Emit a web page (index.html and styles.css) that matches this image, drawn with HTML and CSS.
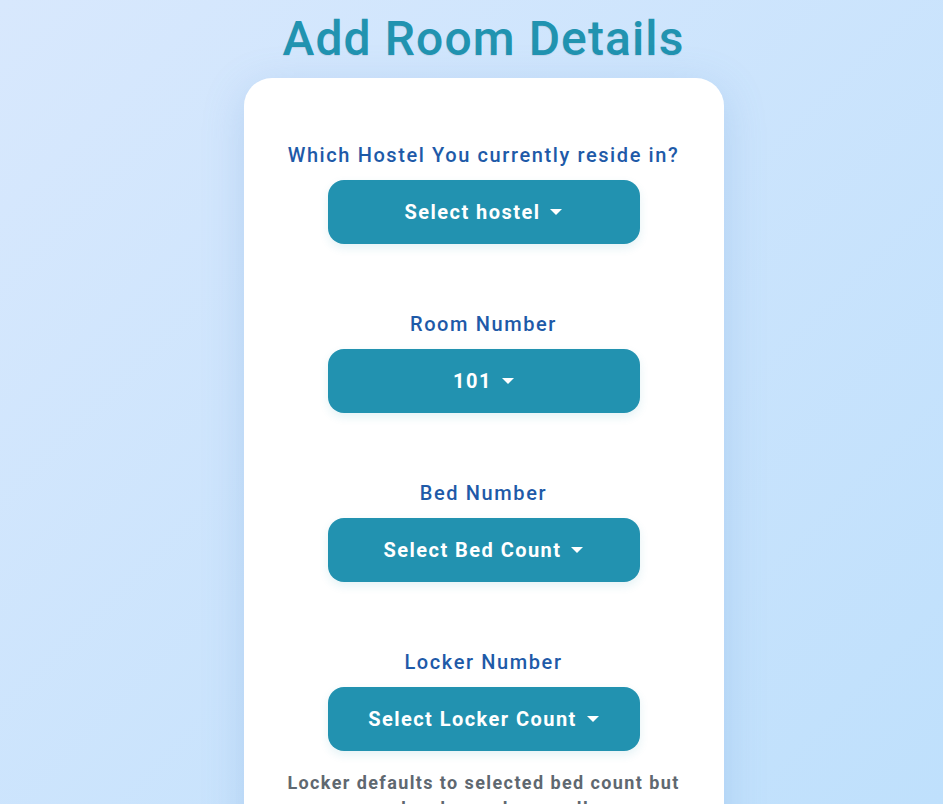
FILE: index.html
```html
<!DOCTYPE html>
<html>
<head>
<meta charset="utf-8">
<link rel="stylesheet" href="styles.css">
</head>
<body>
<main class="page">
  <h1 class="title">Add Room Details</h1>
  <section class="card">
    <div class="field">
      <label class="label">Which Hostel You currently reside in?</label>
      <button class="select">Select hostel <span class="caret"></span></button>
    </div>
    <div class="field">
      <label class="label">Room Number</label>
      <button class="select">101 <span class="caret"></span></button>
    </div>
    <div class="field">
      <label class="label">Bed Number</label>
      <button class="select">Select Bed Count <span class="caret"></span></button>
    </div>
    <div class="field">
      <label class="label">Locker Number</label>
      <button class="select">Select Locker Count <span class="caret"></span></button>
      <p class="note">Locker defaults to selected bed count but can be changed manually.</p>
    </div>
  </section>
</main>
</body>
</html>
```
FILE: styles.css
```css
* { box-sizing: border-box; }
html, body { margin: 0; padding: 0; height: 100%; }
body {
  font-family: Roboto, "Liberation Sans", sans-serif;
  background: linear-gradient(135deg, #d8e8fd 0%, #bfe0fc 100%);
  min-height: 100vh;
  overflow: hidden;
}
.page {
  display: flex;
  flex-direction: column;
  align-items: center;
  padding-top: 10px;
  padding-left: 24px;
}
.title {
  margin: 0;
  font-size: 48px;
  font-weight: 500;
  color: #2193b0;
  letter-spacing: 1.1px;
  line-height: 58px;
  text-shadow: 0 1px 1px rgba(0,0,0,0.08);
}
.card {
  margin-top: 10px;
  width: 480px;
  background: #fff;
  border-radius: 28px;
  padding: 63px 40px 40px;
  box-shadow: 0 10px 40px rgba(100, 150, 210, 0.25);
  display: flex;
  flex-direction: column;
  align-items: center;
  gap: 66px;
}
.field {
  display: flex;
  flex-direction: column;
  align-items: center;
  gap: 11px;
  width: 100%;
}
.label {
  font-size: 20px;
  font-weight: 500;
  color: #1e5aa8;
  letter-spacing: 1.6px;
  line-height: 28px;
  white-space: nowrap;
}
.select {
  width: 312px;
  height: 64px;
  border: none;
  border-radius: 16px;
  background: #2292b0;
  color: #fff;
  font-family: inherit;
  font-size: 20px;
  font-weight: 700;
  letter-spacing: 1.45px;
  display: flex;
  align-items: center;
  justify-content: center;
  gap: 0;
  box-shadow: 0 4px 10px rgba(34, 146, 176, 0.12);
  padding: 0;
}
.caret {
  display: inline-block;
  width: 0;
  height: 0;
  border-left: 6px solid transparent;
  border-right: 6px solid transparent;
  border-top: 6px solid #fff;
  margin-left: 10px;
}
.note {
  margin: 8px 0 0;
  text-align: center;
  font-size: 18px;
  font-weight: 700;
  color: #5f6870;
  letter-spacing: 1.4px;
  line-height: 26px;
}
```
